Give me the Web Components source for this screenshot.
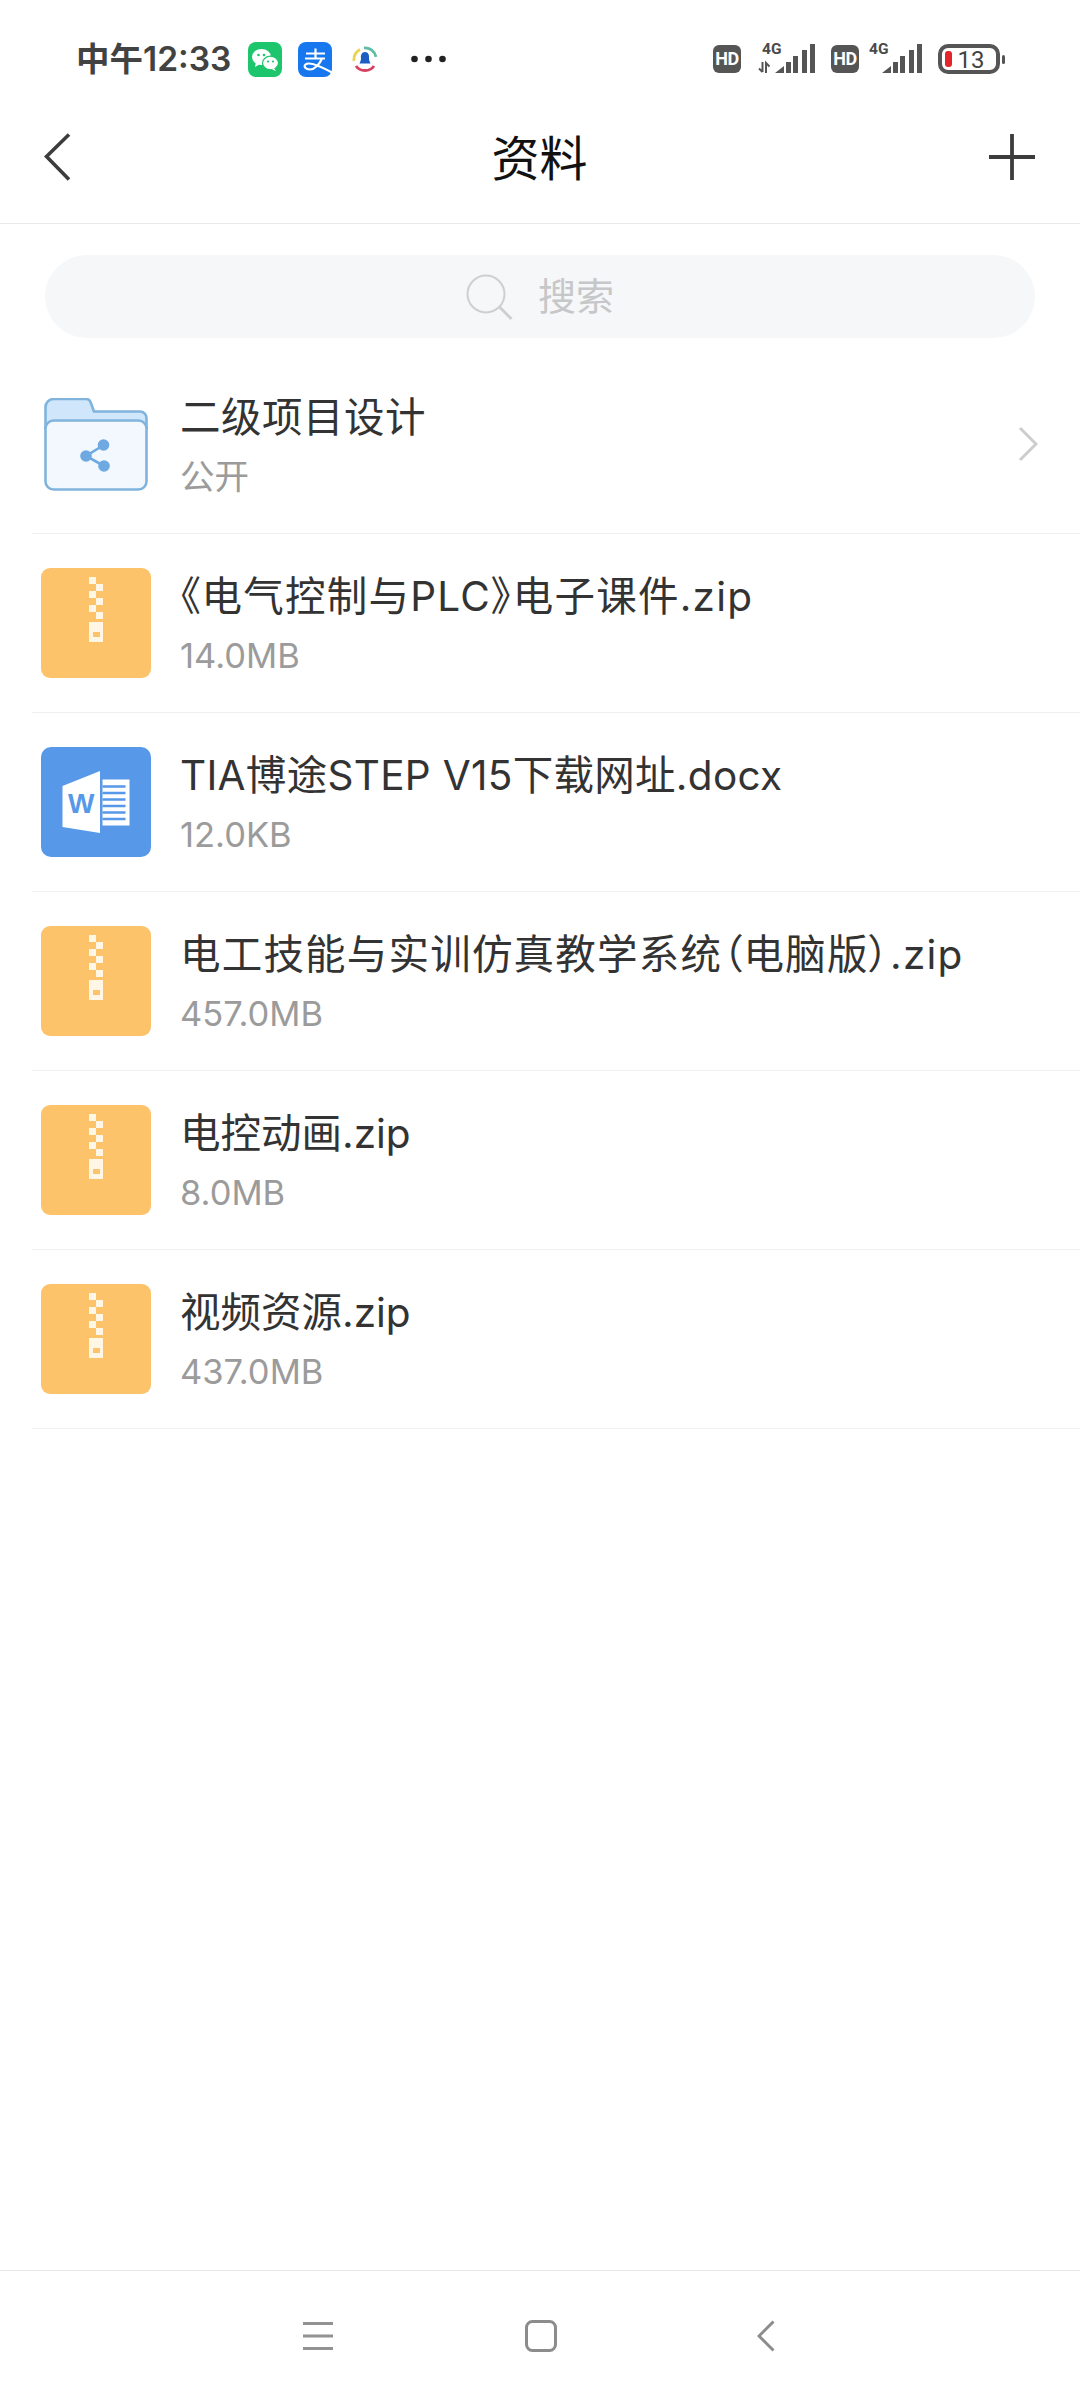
<!DOCTYPE html>
<html lang="zh">
<head>
<meta charset="utf-8">
<title>资料</title>
<style>
  html, body {
    margin: 0;
    background: #fff;
    font-family: Inter, "Noto Sans CJK SC", sans-serif;
  }
</style>
</head>
<body>
<phone-screen>
  <status-bar slot="top"></status-bar>
  <nav-header slot="top" heading="资料"></nav-header>
  <search-box slot="top" placeholder="搜索"></search-box>
  <file-row icon="folder" name="二级项目设计" meta="公开" arrow style="--track: 0.5px"></file-row>
  <file-row icon="zip" name="《电气控制与PLC》电子课件.zip" meta="14.0MB" style="--track: 1.25px"></file-row>
  <file-row icon="word" name="TIA博途STEP V15下载网址.docx" meta="12.0KB" style="--track: 0.3px"></file-row>
  <file-row icon="zip" name="电工技能与实训仿真教学系统（电脑版）.zip" meta="457.0MB" style="--track: 1.2px"></file-row>
  <file-row icon="zip" name="电控动画.zip" meta="8.0MB" style="--track: 0"></file-row>
  <file-row icon="zip" name="视频资源.zip" meta="437.0MB" style="--track: 0"></file-row>
  <bottom-nav slot="bottom"></bottom-nav>
</phone-screen>

<script>
class PhoneScreen extends HTMLElement {
  constructor() {
    super();
    this.attachShadow({ mode: 'open' });
    this.shadowRoot.innerHTML = `
      <style>
        :host {
          display: flex;
          flex-direction: column;
          width: 1080px;
          height: 2400px;
          background: #fff;
          overflow: hidden;
        }
        .list {
          flex: 1;
          display: block;
        }
      </style>
      <slot name="top"></slot>
      <div class="list"><slot></slot></div>
      <slot name="bottom"></slot>
    `;
  }
}

class StatusBar extends HTMLElement {
  constructor() {
    super();
    this.attachShadow({ mode: 'open' });
    this.shadowRoot.innerHTML = `
      <style>
        :host {
          display: flex;
          align-items: center;
          box-sizing: border-box;
          height: 91px;
          padding: 27px 75px 0 76px;
          color: #424242;
        }
        .time {
          font: 600 33.500px/40px Inter, "Noto Sans CJK SC", sans-serif;
          white-space: nowrap;
          width: 172px;
        }
        svg { display: block; flex: none; }
        .alipay { margin-left: 16px; }
        .news { margin-left: 20px; }
        .dots { margin-left: 33px; }
        .right { margin-left: auto; display: flex; align-items: center; }
        .hd {
          width: 28px;
          height: 28px;
          border-radius: 6px;
          background: #555;
          color: #fff;
          font: 700 18px/28px Roboto, sans-serif;
          text-align: center;
          letter-spacing: -0.5px;
        }
        .sig1 { margin-left: 17px; }
        .hd2 { margin-left: 15px; }
        .sig2 { margin-left: 10px; }
        .batt { margin-left: 15px; }
        text { font-family: Roboto, sans-serif; }
      </style>
      <span class="time">中午12:33</span>
      <svg width="34" height="35" viewBox="0 0 34 35">
        <rect width="34" height="35" rx="8" fill="#1dc56c"/>
        <ellipse cx="13.500" cy="15" rx="9.500" ry="8" fill="#fff"/>
        <path d="M8 20l-1 5 5-3z" fill="#fff"/>
        <ellipse cx="22.500" cy="21" rx="8" ry="6.800" fill="#fff" stroke="#1dc56c" stroke-width="1.200"/>
        <path d="M26 26l2 3-4-1.500z" fill="#fff"/>
        <circle cx="10.500" cy="13" r="1.300" fill="#1dc56c"/>
        <circle cx="16" cy="13" r="1.300" fill="#1dc56c"/>
        <circle cx="20" cy="19.500" r="1.100" fill="#1dc56c"/>
        <circle cx="25" cy="19.500" r="1.100" fill="#1dc56c"/>
      </svg>
      <svg class="alipay" width="34" height="35" viewBox="0 0 34 35">
        <rect width="34" height="35" rx="8" fill="#1677ee"/>
        <path d="M8 11.500h19M17.500 6.500v10M7 16.500h20M24 16.500c-2.500 6-7.500 11-12 11-4.500 0-6.500-3-4.500-5 3-2.800 11-.5 26.500 8"
          fill="none" stroke="#fff" stroke-width="2.200"/>
      </svg>
      <svg class="news" width="26" height="27" viewBox="0 0 26 27">
        <path d="M8 3.500C3.500 6 1.500 10 2 15" fill="none" stroke="#e9d456" stroke-width="2.800"/>
        <path d="M12 1.800c5.500-.3 10.500 3 12 9" fill="none" stroke="#5fbda6" stroke-width="2.800"/>
        <path d="M4 20c4 6 14 6 18 0" fill="none" stroke="#d8415f" stroke-width="2.800"/>
        <path d="M13 6c3 0 4.500 3 4 6-.3 2 1 4 1.500 5.500h-11C8 16 9.300 14 9 12c-.5-3 1-6 4-6z" fill="#1b5fc4"/>
      </svg>
      <svg class="dots" width="35" height="8" viewBox="0 0 35 8">
        <circle cx="3.500" cy="4" r="3.300" fill="#222"/>
        <circle cx="17.500" cy="4" r="3.300" fill="#222"/>
        <circle cx="31.500" cy="4" r="3.300" fill="#222"/>
      </svg>
      <div class="right">
        <div class="hd">HD</div>
        <svg class="sig1" width="58" height="40" viewBox="0 -4 58 40">
          <text x="4" y="11" font-size="15.500" font-weight="700" fill="#4a4a4a">4G</text>
          <path d="M4.500 19v10M1 25.500L4.500 29M8 30V20l3.500 3.500" fill="none" stroke="#555" stroke-width="2"/>
          <path d="M17 30l9-7v7z" fill="#555"/>
          <path d="M28 30V19h5v11zM35 30V13h5v17zM44 30V7h5v23zM52 30V1h5v29z" fill="#555"/>
        </svg>
        <div class="hd hd2">HD</div>
        <svg class="sig2" width="54" height="40" viewBox="0 -4 54 40">
          <text x="0" y="11" font-size="15.500" font-weight="700" fill="#4a4a4a">4G</text>
          <path d="M13 30l9-7v7z" fill="#555"/>
          <path d="M24 30V19h5v11zM31 30V13h5v17zM40 30V7h5v23zM48 30V1h5v29z" fill="#555"/>
        </svg>
        <svg class="batt" width="67" height="30" viewBox="0 0 67 30">
          <rect x="2" y="2" width="58" height="26" rx="8" fill="#fff" stroke="#555" stroke-width="4"/>
          <rect x="7" y="7" width="7" height="16" rx="3" fill="#e3242b"/>
          <rect x="64" y="11" width="3" height="9" rx="1.500" fill="#555"/>
          <text x="19.500" y="23.500" font-size="24" fill="#444">13</text>
        </svg>
      </div>
    `;
  }
}

class NavHeader extends HTMLElement {
  constructor() {
    super();
    this.attachShadow({ mode: 'open' });
    this.shadowRoot.innerHTML = `
      <style>
        :host {
          display: flex;
          align-items: center;
          justify-content: space-between;
          box-sizing: border-box;
          height: 133px;
          padding: 0 45px 0 44px;
          border-bottom: 1px solid #e9e9e9;
        }
        h1 {
          margin: 0;
          padding-bottom: 5px;
          font: 400 48px/60px "Noto Sans CJK SC", sans-serif;
          color: #111;
        }
        svg { display: block; }
      </style>
      <svg width="46" height="48" viewBox="0 0 46 48">
        <path d="M25 1.500L2.500 23.500 25 46.500" fill="none" stroke="#3c3c3c" stroke-width="3.600"/>
      </svg>
      <h1></h1>
      <svg width="46" height="48" viewBox="0 0 46 48">
        <path d="M23 1v46M0 24h46" fill="none" stroke="#3c3c3c" stroke-width="3.800"/>
      </svg>
    `;
  }

  connectedCallback() {
    this.shadowRoot.querySelector('h1').textContent = this.getAttribute('heading');
  }
}

class SearchBox extends HTMLElement {
  constructor() {
    super();
    this.attachShadow({ mode: 'open' });
    this.shadowRoot.innerHTML = `
      <style>
        :host {
          display: flex;
          align-items: center;
          justify-content: center;
          gap: 24px;
          box-sizing: border-box;
          width: 990px;
          height: 83px;
          margin: 31px 0 17px 45px;
          border-radius: 42px;
          background: #f6f7f8;
        }
        span {
          padding-bottom: 5px;
          font: 400 38px/50px "Noto Sans CJK SC", sans-serif;
          color: #c6c7c8;
        }
        svg { display: block; margin-top: 3px; }
      </style>
      <svg width="48" height="48" viewBox="0 0 48 48">
        <circle cx="20" cy="20" r="18.500" fill="none" stroke="#cfcfcf" stroke-width="2"/>
        <path d="M33.500 33l12 12" fill="none" stroke="#cfcfcf" stroke-width="3"/>
      </svg>
      <span></span>
    `;
  }

  connectedCallback() {
    this.shadowRoot.querySelector('span').textContent = this.getAttribute('placeholder');
  }
}

class FileIcon extends HTMLElement {
  static icons = {
    folder: `
      <svg width="104" height="93" viewBox="0 0 104 93">
        <path d="M1.500 30V9a8 8 0 0 1 8-8H42q3.500 0 4.500 3L50 13.500H96a6.500 6.500 0 0 1 6.500 6.500V30z" fill="#cfe6fb" stroke="#80b4dd" stroke-width="2.600"/>
        <rect x="1.500" y="22.500" width="101" height="69" rx="8" fill="#f2f8fe" stroke="#80b4dd" stroke-width="2.600"/>
        <path d="M59 47.500L42 58l18 10" fill="none" stroke="#6fa9e2" stroke-width="2.600"/>
        <circle cx="59.500" cy="47" r="5.800" fill="#6fa9e2"/>
        <circle cx="42" cy="58" r="5.800" fill="#6fa9e2"/>
        <circle cx="60" cy="68" r="5.800" fill="#6fa9e2"/>
      </svg>`,
    zip: `
      <svg width="110" height="110" viewBox="0 0 110 110">
        <rect width="110" height="110" rx="9" fill="#fdc36b"/>
        <path d="M48 9h7v7h-7zM55 16h7v7h-7zM48 23h7v7h-7zM55 30h7v7h-7zM48 37h7v7h-7zM55 44h7v7h-7z" fill="#fff6e6"/>
        <path fill-rule="evenodd" d="M48 54h14v20H48zM52 64v5h7v-5z" fill="#fff6e6"/>
      </svg>`,
    word: `
      <svg width="110" height="110" viewBox="0 0 110 110">
        <rect width="110" height="110" rx="10" fill="#5898e8"/>
        <path d="M21.500 39L59 24v62l-37.500-6z" fill="#fff"/>
        <rect x="61.500" y="32.500" width="27" height="46" fill="#fff"/>
        <path d="M61.500 39.500h23M61.500 46h23M61.500 52.500h23M61.500 59h23M61.500 65.500h23M61.500 72h23" stroke="#5898e8" stroke-width="2.400"/>
        <text x="27" y="66" font-family="Liberation Sans, sans-serif" font-size="28" font-weight="700" fill="#5898e8">W</text>
      </svg>`
  };

  static get observedAttributes() {
    return ['name'];
  }

  constructor() {
    super();
    this.attachShadow({ mode: 'open' });
    this.shadowRoot.innerHTML = `
      <style>
        :host {
          display: flex;
          align-items: center;
          justify-content: center;
          flex: none;
          width: 110px;
          height: 110px;
        }
        svg { display: block; }
      </style>
      <div id="holder"></div>
    `;
  }

  attributeChangedCallback(name, oldValue, newValue) {
    this.shadowRoot.getElementById('holder').innerHTML = FileIcon.icons[newValue] || '';
  }
}

class FileRow extends HTMLElement {
  constructor() {
    super();
    this.attachShadow({ mode: 'open' });
    this.shadowRoot.innerHTML = `
      <style>
        :host {
          display: flex;
          align-items: center;
          gap: 29px;
          box-sizing: border-box;
          height: 179px;
          margin-left: 32px;
          padding-left: 9px;
          border-bottom: 1px solid #f0f0f0;
        }
        .text {
          flex: 1;
          display: flex;
          flex-direction: column;
          gap: 7px;
          min-width: 0;
          margin-top: 2px;
        }
        .name {
          font: 400 40.500px/56px Inter, "Noto Sans CJK SC", sans-serif;
          font-feature-settings: "palt";
          letter-spacing: var(--track, 0.3px);
          color: #333;
          white-space: nowrap;
        }
        .meta {
          font: 400 34.500px/48px Inter, "Noto Sans CJK SC", sans-serif;
          color: #9b9b9b;
        }
        svg.arrow {
          display: block;
          flex: none;
          margin-right: 42px;
        }
      </style>
      <file-icon></file-icon>
      <div class="text">
        <div class="name"></div>
        <div class="meta"></div>
      </div>
    `;
  }

  connectedCallback() {
    const root = this.shadowRoot;
    root.querySelector('file-icon').setAttribute('name', this.getAttribute('icon'));
    root.querySelector('.name').textContent = this.getAttribute('name');
    root.querySelector('.meta').textContent = this.getAttribute('meta');
    if (this.hasAttribute('arrow')) {
      root.querySelector('.text').insertAdjacentHTML('afterend', `
        <svg class="arrow" width="20" height="36" viewBox="0 0 20 36">
          <path d="M2 2l16 16L2 34" fill="none" stroke="#cdcdcd" stroke-width="3"/>
        </svg>`);
    }
  }
}

class BottomNav extends HTMLElement {
  constructor() {
    super();
    this.attachShadow({ mode: 'open' });
    this.shadowRoot.innerHTML = `
      <style>
        :host {
          display: flex;
          justify-content: center;
          align-items: center;
          gap: 192px;
          box-sizing: border-box;
          height: 130px;
          padding-right: 3px;
          border-top: 1px solid #e8e8e8;
        }
        svg { display: block; }
        .back { margin-left: 8px; }
      </style>
      <svg width="30" height="28" viewBox="0 0 30 28">
        <path d="M0 1.500h30M0 14h30M0 26.500h30" fill="none" stroke="#929292" stroke-width="3"/>
      </svg>
      <svg width="32" height="32" viewBox="0 0 32 32">
        <rect x="1.500" y="1.500" width="29" height="29" rx="6" fill="none" stroke="#8c8c8c" stroke-width="3"/>
      </svg>
      <svg class="back" width="18" height="32" viewBox="0 0 18 32">
        <path d="M16.500 1.500L2 16l14.500 14.500" fill="none" stroke="#8c8c8c" stroke-width="3"/>
      </svg>
    `;
  }
}

customElements.define('phone-screen', PhoneScreen);
customElements.define('status-bar', StatusBar);
customElements.define('nav-header', NavHeader);
customElements.define('search-box', SearchBox);
customElements.define('file-icon', FileIcon);
customElements.define('file-row', FileRow);
customElements.define('bottom-nav', BottomNav);
</script>
</body>
</html>
